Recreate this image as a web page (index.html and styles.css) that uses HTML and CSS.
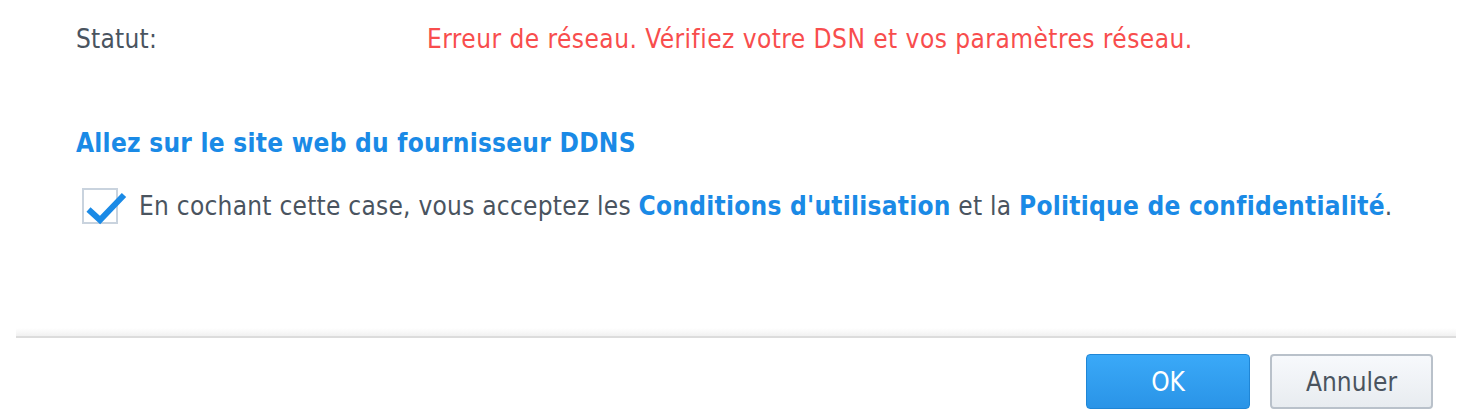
FILE: index.html
```html
<!DOCTYPE html>
<html lang="fr">
<head>
<meta charset="utf-8">
<title>DDNS</title>
<link rel="stylesheet" href="styles.css">
</head>
<body>
<div class="dialog">
  <div class="content">
    <div class="status-row">
      <span class="label">Statut:</span>
      <span class="error">Erreur de réseau. Vérifiez votre DSN et vos paramètres réseau.</span>
    </div>
    <a class="provider-link" href="#">Allez sur le site web du fournisseur DDNS</a>
    <div class="check-row">
      <span class="checkbox">
        <svg class="checkmark" width="44" height="40" viewBox="0 0 44 40">
          <path d="M4.5 19.5 L16 30 L40 5" fill="none" stroke="#1a8ae6" stroke-width="6" stroke-linecap="butt" stroke-linejoin="miter"/>
        </svg>
      </span>
      <span class="check-text">En cochant cette case, vous acceptez les <a href="#">Conditions d'utilisation</a> et la <a href="#">Politique de confidentialité</a>.</span>
    </div>
  </div>
  <div class="footer">
    <div class="divider"></div>
    <div class="buttons">
      <button class="btn btn-primary">OK</button>
      <button class="btn btn-secondary">Annuler</button>
    </div>
  </div>
</div>
</body>
</html>
```
FILE: styles.css
```css
html, body {
  margin: 0;
  padding: 0;
  background: #ffffff;
}
body {
  width: 1480px;
  height: 418px;
  overflow: hidden;
  font-family: "DejaVu Sans Condensed", "DejaVu Sans", sans-serif;
  font-size: 26px;
  line-height: 30px;
  letter-spacing: 0.25px;
  color: #4a545f;
}
.dialog {
  display: flex;
  flex-direction: column;
  height: 418px;
}
.content {
  padding: 24px 0 0 76px;
  display: flex;
  flex-direction: column;
  align-items: flex-start;
  height: 304px;
  box-sizing: border-box;
}
.status-row {
  display: flex;
  height: 30px;
}
.label {
  width: 351px;
}
.error {
  color: #f84d4d;
  letter-spacing: 0.46px;
}
.provider-link {
  margin-top: 74px;
  font-weight: bold;
  color: #1a8ae6;
  text-decoration: none;
}
.check-row {
  margin-top: 30px;
  display: flex;
  align-items: center;
  margin-left: 6px;
}
.checkbox {
  position: relative;
  width: 36px;
  height: 36px;
  box-sizing: border-box;
  border: 2px solid #c9d3de;
  flex: none;
}
.checkmark {
  position: absolute;
  left: 0;
  top: 0;
}
.check-text {
  margin-left: 21px;
}
.check-text a {
  font-weight: bold;
  color: #1a8ae6;
  text-decoration: none;
}
.footer {
  margin: 24px 24px 0 16px;
}
.divider {
  height: 8px;
  background: linear-gradient(#ffffff, #f1f1f1);
  border-bottom: 2px solid #dcdcdc;
}
.buttons {
  display: flex;
  justify-content: flex-end;
  gap: 20px;
  padding: 16px 23px 0 0;
}
.btn {
  height: 55px;
  border-radius: 4px;
  font-family: "DejaVu Sans Condensed", "DejaVu Sans", sans-serif;
  font-size: 26px;
  padding: 0;
  box-sizing: border-box;
}
.btn-primary {
  width: 164px;
  color: #ffffff;
  background: linear-gradient(#3aa9f8, #2a94e7);
  border: 1px solid #1f86d6;
}
.btn-secondary {
  width: 163px;
  color: #4a545f;
  background: linear-gradient(#f7f9fc, #e8ecf0);
  border: 2px solid #b9c1ca;
}
```
